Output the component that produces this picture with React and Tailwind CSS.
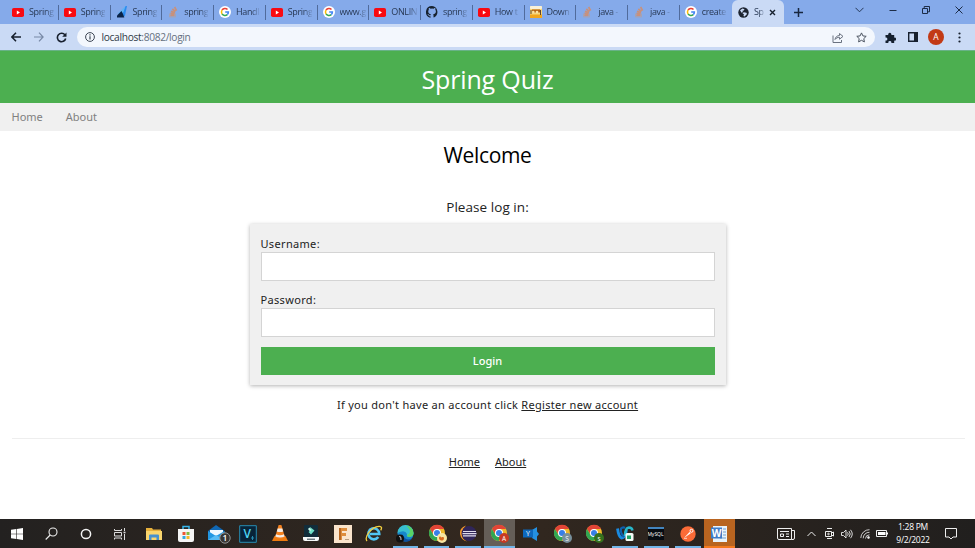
import React from "react";

const YouTube = () => (
  <svg width="12" height="9" viewBox="0 0 12 9">
    <rect width="12" height="9" rx="1.8" fill="#f80a12" />
    <path d="M4.8 2.5 8 4.5 4.8 6.5z" fill="#fff" />
  </svg>
);
const Azure = () => (
  <svg width="12" height="12" viewBox="0 0 12 12">
    <path d="M9.500 0 11 0 8.800 10.500 5 9z" fill="#2c8cf0" />
    <path d="M9.500 0 2 7.500 4 8.500 7.500 6z" fill="#5fb4f5" />
    <path d="M5.500 5 1 9.500v2h7.300L7 8z" fill="#0a2348" />
  </svg>
);
const Stack = () => (
  <svg width="12" height="12" viewBox="0 0 12 12" fill="none">
    <path d="M2.500 7.500v3.500h6V7.500" stroke="#a5a3b4" strokeWidth="1" />
    <path d="M3.300 9.400h4.300M3.400 7.300l4.300.600M4 5.200l4 1.500M5.300 3l3.200 2.500M7.600 1l2 3.700" stroke="#c8917c" strokeWidth="1.700" />
  </svg>
);
const Google = () => (
  <svg width="12" height="12" viewBox="0 0 12 12" fill="none" strokeWidth="1.5">
    <circle cx="6" cy="6" r="6" fill="#fff" />
    <path d="M8.5 3.6A3.5 3.5 0 0 0 3 4.2" stroke="#ea4335" />
    <path d="M3 4.2a3.5 3.5 0 0 0 0 3.6" stroke="#fbbc05" />
    <path d="M3 7.8a3.5 3.5 0 0 0 5.3.8" stroke="#34a853" />
    <path d="M8.3 8.6A3.3 3.3 0 0 0 9.4 6.1H6.2" stroke="#4285f4" />
  </svg>
);
const GitHub = () => (
  <svg width="12" height="12" viewBox="0 0 16 16">
    <path
      fill="#16212e"
      d="M8 0a8 8 0 0 0-2.5 15.6c.4.1.5-.2.5-.4v-1.5c-2 .5-2.6-.9-2.7-1.3-.1-.3-.5-.9-.8-1.1-.3-.2-.7-.6 0-.6s1.100.6 1.300.8c.7 1.200 1.900.9 2.300.7.1-.5.3-.9.5-1.100-1.800-.2-3.600-.9-3.600-4 0-.9.3-1.600.8-2.200-.1-.2-.4-1 .1-2.100 0 0 .7-.2 2.200.8a7.500 7.500 0 0 1 4 0c1.500-1 2.200-.8 2.200-.8.4 1.100.2 1.900.1 2.100.5.6.8 1.300.8 2.200 0 3.100-1.900 3.800-3.700 4 .3.2.5.7.5 1.500v2.200c0 .2.1.5.6.4A8 8 0 0 0 8 0z"
    />
  </svg>
);
const Javatpoint = () => (
  <svg width="12" height="12" viewBox="0 0 12 12">
    <rect width="12" height="12" rx="1" fill="#f8d57b" />
    <rect width="12" height="3" rx="1" fill="#f7f1da" />
    <path d="M2 3.5h8v3H2z" fill="#b56313" />
    <circle cx="3.3" cy="6" r="1.3" fill="#fae2a0" />
    <circle cx="7" cy="6" r="1.3" fill="#fae2a0" />
    <path d="M0 8.500h12V12H0z" fill="#f2a51d" />
    <path d="M1 4v4M10.500 4v5" stroke="#5d4529" />
  </svg>
);
const Globe = () => (
  <svg width="11" height="11" viewBox="0 0 11 11">
    <circle cx="5.500" cy="5.500" r="5.200" fill="#1d2430" />
    <path d="M2 3.200 4.500 1.600l2 .6-.7 1.200-1.400.4.500 1.200-1.300.7zM5.800 5.200l2.600.6.6 1.200-2.400 2.500-1.200-.5.6-1.500-1.500-1.200z" fill="#cadaf5" />
  </svg>
);

const tabs = [
  [YouTube, "Spring"],
  [YouTube, "Spring"],
  [Azure, "Spring"],
  [Stack, "spring"],
  [Google, "Handl"],
  [YouTube, "Spring"],
  [Google, "www.g"],
  [YouTube, "ONLIN"],
  [GitHub, "spring"],
  [YouTube, "How t"],
  [Javatpoint, "Down"],
  [Stack, "java -"],
  [Stack, "java -"],
  [Google, "create"],
];

function TabStrip() {
  return (
    <div className="flex h-[24px] bg-[#85aaea] pl-[7px] text-[#24344f]">
      {tabs.map(([Icon, label], i) => (
        <div key={i} className="relative flex w-[51.750px] shrink-0 items-center pl-[5px]">
          <span className="flex w-[12px] shrink-0 justify-center"><Icon /></span>
          <span className="ml-[5px] shrink-0 whitespace-nowrap bg-gradient-to-r from-[#24344f] from-65% to-[#7898d0] bg-clip-text text-[9px] leading-[14px] tracking-[-0.350px] text-transparent">
            {label}
          </span>
          {i < 13 && <span className="absolute right-0 top-[5px] h-[15px] w-px bg-[#506b9c]" />}
        </div>
      ))}
      <div className="flex w-[52px] shrink-0 items-center rounded-t-[6px] bg-[#cadaf5] pl-[6px]">
        <Globe />
        <span className="ml-[5.500px] w-[10px] whitespace-nowrap bg-gradient-to-r from-[#24344f] from-50% to-[#aabbd7] bg-clip-text text-[9px] leading-[14px] tracking-[-0.350px] text-transparent">
          Sp
        </span>
        <svg className="ml-[5px]" width="7" height="7" viewBox="0 0 7 7" stroke="#17202e" strokeWidth="1.400">
          <path d="M1 1l5 5M6 1 1 6" />
        </svg>
      </div>
      <svg className="ml-[10px] mt-[8px]" width="9" height="9" viewBox="0 0 9 9" stroke="#17263f" strokeWidth="1.500">
        <path d="M4.500 0v9M0 4.500h9" />
      </svg>
      <svg className="ml-[52px] mt-[7px]" width="9" height="6" viewBox="0 0 9 6" fill="none" stroke="#253857">
        <path d="M.5.800 4.500 4.800 8.500.800" />
      </svg>
      <svg className="ml-[25px] mt-[6px]" width="8" height="8" viewBox="0 0 8 8" stroke="#1c2c47">
        <path d="M.5 4.500h7" />
      </svg>
      <svg className="ml-[25px] mt-[6px]" width="8" height="8" viewBox="0 0 8 8" fill="none" stroke="#1c2c47">
        <path d="M.5 2.500h5v5h-5zM2.200 2V.5h5.300v5.300H6" />
      </svg>
      <svg className="ml-[25px] mt-[6px]" width="8" height="8" viewBox="0 0 8 8" stroke="#1c2c47">
        <path d="M.500.500l7 7M7.500.500l-7 7" />
      </svg>
    </div>
  );
}

function Toolbar() {
  return (
    <div className="flex h-[26px] items-center bg-[#cadaf5] pl-[11px]">
      <svg width="10" height="10" viewBox="0 0 10 10" fill="none" stroke="#17202e" strokeWidth="1.500">
        <path d="M10 5H1M5 .7.900 5 5 9.300" />
      </svg>
      <svg className="ml-[13px]" width="10" height="10" viewBox="0 0 10 10" fill="none" stroke="#7788a5" strokeWidth="1.200">
        <path d="M0 5h9M5 .7 9.100 5 5 9.300" />
      </svg>
      <svg className="ml-[12px]" width="11" height="11" viewBox="0 0 11 11">
        <path d="M9 3A4.200 4.200 0 1 0 9.700 6.500" fill="none" stroke="#17202e" strokeWidth="1.600" />
        <path d="M10.500.500v4.300H6.200z" fill="#17202e" />
      </svg>
      <div className="ml-[10px] flex h-[20px] w-[798px] items-center rounded-full bg-[#f3f7fd] pl-[8px] pr-[8px]">
        <svg width="10" height="10" viewBox="0 0 10 10" fill="none" stroke="#3d4653">
          <circle cx="5" cy="5" r="4.400" />
          <path d="M5 4.300v3.200M5 2.300v1.200" strokeWidth="1.200" />
        </svg>
        <span className="ml-[6.500px] text-[10.200px] leading-[14px] tracking-[-0.320px] text-[#667080]">
          <span className="text-[#303946]">localhost</span>:8082/login
        </span>
        <svg className="ml-auto" width="12" height="11" viewBox="0 0 12 11" fill="none" stroke="#6a7280">
          <path d="M1 3.500v7h8.500V8M3 7.500C3.500 4.800 5 3.700 7.500 3.500v-2L11 4.400 7.500 7.200V5.300C5.500 5.300 4.200 6 3 7.500z" />
        </svg>
        <svg className="ml-[12px]" width="11" height="11" viewBox="0 0 11 11" fill="none" stroke="#4b5360">
          <path d="M5.500.900l1.400 3 3.300.400-2.400 2.300.600 3.300-2.900-1.600-2.900 1.600.600-3.300L.800 4.300l3.300-.400z" />
        </svg>
      </div>
      <svg className="ml-[10px]" width="11" height="11" viewBox="0 0 11 11" fill="#15202f">
        <path d="M.500 3h2.800a1.600 1.600 0 1 1 3 0h2.900v2.700a1.500 1.500 0 1 1 0 2.900V11H6.300a1.500 1.500 0 1 0-2.900 0H.500V8.400a1.500 1.500 0 1 0 0-2.900z" />
      </svg>
      <svg className="ml-[12px]" width="10" height="10" viewBox="0 0 10 10">
        <path d="M.7.700h8.600v8.600H.700z" fill="none" stroke="#17202e" strokeWidth="1.400" />
        <path d="M6 0h4v10H6z" fill="#17202e" />
      </svg>
      <span className="ml-[10px] flex size-[16px] items-center justify-center rounded-full bg-[#c23a16] text-[8.500px] text-white">A</span>
      <svg className="ml-[14px]" width="3" height="11" viewBox="0 0 3 11" fill="#17202e">
        <circle cx="1.500" cy="1.500" r="1.100" /><circle cx="1.500" cy="5.500" r="1.100" /><circle cx="1.500" cy="9.500" r="1.100" />
      </svg>
    </div>
  );
}

function Field({ label, type }) {
  return (
    <label className="block text-[11px] leading-[17px] tracking-[0.330px] text-[#222]">
      {label}
      <input type={type} className="block h-[29px] w-full border border-[#d4d4d4] bg-white px-2 outline-none" />
    </label>
  );
}

function Page() {
  return (
    <main className="h-[469px] bg-white font-['Noto_Sans','DejaVu_Sans',sans-serif] text-[11px] text-black">
      <header className="flex h-[53px] items-center justify-center border-t border-[#68b287] bg-[#4caf50]">
        <h1 className="pt-[3px] font-['Open_Sans',sans-serif] text-[25px] leading-[36px] tracking-[-0.150px] text-white">Spring Quiz</h1>
      </header>
      <nav className="flex h-[28px] items-center gap-[23px] bg-[#f0f0f0] pl-[11.500px] pt-px text-[#808080]">
        <span>Home</span>
        <span>About</span>
      </nav>
      <h2 className="mt-[8px] text-center font-['Open_Sans',sans-serif] text-[21px] leading-[32px] tracking-[-0.350px]">Welcome</h2>
      <h3 className="mt-[26px] text-center font-['Open_Sans',sans-serif] text-[13.500px] leading-[20px] tracking-[0.060px] text-[#222]">Please log in:</h3>
      <form className="mx-auto mt-[7px] flex h-[161px] w-[476px] flex-col bg-[#f0f0f0] px-[11px] pt-[11px] shadow-[0_1px_4px_rgba(0,0,0,0.300)]">
        <Field label="Username:" type="text" />
        <div className="mt-[10px]"><Field label="Password:" type="password" /></div>
        <button type="button" className="mt-[10px] h-[28px] w-full bg-[#4caf50] text-center font-medium text-white">Login</button>
      </form>
      <p className="mt-[11px] text-center leading-[17px] tracking-[0.300px] text-[#222]">
        If you don't have an account click <span className="underline">Register new account</span>
      </p>
      <div className="ml-[12px] mr-[10px] mt-[25px] h-px bg-[#eeeeee]" />
      <footer className="mt-[14px] flex justify-center gap-[15px] leading-[17px] text-[#222] underline">
        <span>Home</span>
        <span>About</span>
      </footer>
    </main>
  );
}

const Chrome = ({ badge, letter }) => (
  <svg className="ml-[2px]" width="20" height="20" viewBox="0 0 20 20">
    <circle cx="9" cy="9" r="8" fill="#efb92a" />
    <path d="M2 5a8 8 0 0 1 14 0H9L6 11z" fill="#e24436" />
    <path d="M2 5a8 8 0 0 0 6.500 12l4-7L9 12.500 5.500 11z" fill="#31a653" />
    <circle cx="9" cy="9" r="4" fill="#fff" />
    <circle cx="9" cy="9" r="3" fill="#377fe8" />
    <circle cx="14" cy="14" r="5" fill={badge} />
    {letter ? (
      <text x="14" y="16.500" fontSize="6.500" textAnchor="middle" fill="#fff">{letter}</text>
    ) : (
      <path d="M11 14c0-2 2-2 2-.5 1-1 3-.5 3 .5 0 2-1 2.500-2.500 2.500S11 15.500 11 14z" fill="#d86a20" />
    )}
  </svg>
);
const Start = () => (
  <svg width="12" height="12" viewBox="0 0 12 12" fill="#fff">
    <path d="M0 1.700 5.300 1v4.700H0zM5.900.900 12 0v5.700H5.900zM0 6.300h5.300V11L0 10.300zM5.900 6.300H12V12l-6.100-.900z" />
  </svg>
);
const Search = () => (
  <svg width="13" height="13" viewBox="0 0 13 13" fill="none" stroke="#eee" strokeWidth="1.100">
    <circle cx="8" cy="5" r="4" /><path d="M5.200 8 .700 12.500" />
  </svg>
);
const Cortana = () => (
  <svg width="12" height="12" viewBox="0 0 12 12"><circle cx="6" cy="6" r="4.600" fill="none" stroke="#f4f4f4" strokeWidth="1.500" /></svg>
);
const TaskView = () => (
  <svg width="12" height="12" viewBox="0 0 12 12" fill="none" stroke="#ddd">
    <path d="M.5 1v1.500h7V1M.5 4.500h7v3.500h-7zM.5 11.500V10h7v1.500M10.500 0v3M10.500 6v6" /><path d="M9.500 4.500h2" strokeWidth="1.600" />
  </svg>
);
const Explorer = () => (
  <svg width="16" height="14" viewBox="0 0 16 14">
    <path d="M0 1h6l1 1.500h8V12H0z" fill="#e7b13c" /><path d="M0 4h16v9H0z" fill="#f9d56e" />
    <path d="M3 13V8.500q0-1 1-1h8q1 0 1 1V13h-2.500v-2.500h-5V13z" fill="#4690ce" />
  </svg>
);
const Store = () => (
  <svg width="18" height="18" viewBox="0 0 18 18">
    <path d="M6 5V1.500h6V5" fill="none" stroke="#36b6ec" strokeWidth="1.500" />
    <path d="M1 4h16v11q0 2-2 2H3q-2 0-2-2z" fill="#f5f5f5" />
    <path d="M5.500 7h3v3h-3z" fill="#ed5534" /><path d="M9.500 7h3v3h-3z" fill="#82ba3f" />
    <path d="M5.500 11h3v3h-3z" fill="#34a6df" /><path d="M9.500 11h3v3h-3z" fill="#f4b929" />
  </svg>
);
const Mail = () => (
  <svg className="ml-[5px]" width="24" height="20" viewBox="0 0 24 20">
    <path d="M1 7 9 1l8.500 6v9H1z" fill="#1067b3" /><path d="M3 6h13v6H3z" fill="#eef8ff" />
    <path d="M1 7l8 5 8.500-5v9H1z" fill="#2297e2" /><path d="M1 16l8-5 8.500 5z" fill="#55bbf5" />
    <circle cx="18" cy="14" r="5.200" fill="#393634" stroke="#929292" />
    <text x="18" y="17" textAnchor="middle" fontSize="8.500" fontWeight="600" fill="#fff">1</text>
  </svg>
);
const Vegas = () => (
  <svg width="18" height="18" viewBox="0 0 18 18">
    <path d="M.7.700h16.600v16.600H.700z" fill="#082439" stroke="#278db2" />
    <text x="8.300" y="13" textAnchor="middle" fontSize="12" fontWeight="600" fill="#4fd6f3">V</text>
    <path d="M13.500 11v4M12 13h3" stroke="#278db2" />
  </svg>
);
const Vlc = () => (
  <svg width="16" height="17" viewBox="0 0 16 17">
    <path d="M2.500 11h11L16 16H0z" fill="#ee7b10" /><path d="M6.600 0h2.800l3.600 12.500q-5 2.500-10 0z" fill="#f58220" />
    <path d="M5.700 3.500h4.600l.9 3q-3.200 1.200-6.400 0zM4 9.300q4 1.700 8 0l.6 2.200q-4.600 2-9.200 0z" fill="#f4eee8" />
  </svg>
);
const Filmora = () => (
  <svg width="16" height="17" viewBox="0 0 16 17">
    <rect x="1" width="14" height="13" rx="1" fill="#112d3b" /><path d="M7 2l4.500 3.500L8 9.500 5.500 7 7.500 5.500z" fill="#6de0c6" /><path d="M5 4 6.500 2.500 8.500 5 7 6.500z" fill="#c6f5ea" />
    <path d="M0 12h16v2q0 2-2 2H2q-2 0-2-2z" fill="#f7fafa" /><path d="M4 14.200h8" stroke="#30404b" />
  </svg>
);
const FLogo = () => (
  <svg width="18" height="18" viewBox="0 0 18 18">
    <path d="M0 0h18v18H0z" fill="#fae4cc" /><path d="M5 3h8v3H8v2h4v3H8v4H5z" fill="#de8d3c" /><path d="M5 3h2v12H5z" fill="#b86722" /><path d="M11 14.500h4" stroke="#b79c80" />
  </svg>
);
const IE = () => (
  <svg width="18" height="17" viewBox="0 0 18 17" fill="none">
    <path d="M13.300 12A5.500 5.500 0 1 1 14.300 9H5" stroke="#51c6f4" strokeWidth="2.600" />
    <path d="M2 16C-1 12 6 2 14 1.300c3-.2 3 2 1.700 4" stroke="#f3cf40" strokeWidth="1.300" />
  </svg>
);
const Edge = () => (
  <svg width="18" height="18" viewBox="0 0 18 18">
    <circle cx="9.500" cy="8.500" r="8" fill="#1687cb" /><path d="M1.500 8A8 8 0 0 1 17.500 8q0 4-4.500 4-3 0-2-3Q9 4 1.500 8z" fill="#38bfd0" />
    <path d="M10 .500A8 8 0 0 1 17.500 8q0 4-4.500 4-2 0-2-2c5-2 3-6-1-9.500z" fill="#5ad365" />
    <path d="M6 9q4 8 10 4.500-3 4-8 3-4-2-2-7.500z" fill="#0d4f9e" /><circle cx="4" cy="13.500" r="4" fill="#111" /><path d="M3 12q2-2 2 3" stroke="#ccc" fill="none" />
  </svg>
);
const Eclipse = () => (
  <svg width="18" height="17" viewBox="0 0 18 17">
    <path d="M7 .500Q0 3 1 9t7 7.500Q2 13 3 8t4-7.500z" fill="#f59a2c" /><circle cx="10" cy="8.500" r="7.500" fill="#302659" />
    <path d="M4 6.500h13M3.500 8.700h14M4 10.900h13" stroke="#dfdceb" strokeWidth="1.200" />
  </svg>
);
const YTool = () => (
  <svg width="16" height="14" viewBox="0 0 16 14">
    <path d="M9 3 14 0v4.500L16 7l-2 2.500V14L9 11z" fill="#2590e0" /><path d="M0 2.500h10v8H0z" fill="#0d68bd" />
    <text x="5" y="9.300" textAnchor="middle" fontSize="7" fill="#fff">Y</text>
  </svg>
);
const WebEx = () => (
  <svg width="18" height="17" viewBox="0 0 18 17" fill="none">
    <path d="M1.500 3.500q1 8 4 9.500 3 0 4-4l1-4" stroke="#198be2" strokeWidth="2.800" />
    <path d="M8 12Q4 8 5 3.500 7 1.500 9 3" stroke="#0c5fae" strokeWidth="2.200" />
    <path d="M9 11q0-8 4-8.500 3 0 3.500 3" stroke="#27b7cb" strokeWidth="2.500" /><rect x="9.500" y="8" width="8" height="8" rx="1.500" fill="#f4fbf7" /><path d="M11 10.500h4v3.500h-4z" fill="#20a568" />
  </svg>
);
const MySql = () => (
  <svg width="16" height="13" viewBox="0 0 16 13">
    <path d="M0 0h16v13H0z" fill="#060b12" /><path d="M0 0h16v2H0z" fill="#4385bf" />
    <text x="7.500" y="8.500" textAnchor="middle" fontSize="5" fill="#fff">MySQL</text>
  </svg>
);
const Postman = () => (
  <svg width="16" height="16" viewBox="0 0 16 16">
    <circle cx="8" cy="8" r="7.700" fill="#fb6b37" /><path d="M4 12 9.500 6l1.300 1.300z" fill="#fff" /><circle cx="11.500" cy="4.800" r="1.500" fill="none" stroke="#fff" /><path d="M4 12.300h3" stroke="#fff" strokeWidth=".7" />
  </svg>
);
const Word = () => (
  <svg width="17" height="16" viewBox="0 0 17 16">
    <path d="M2 0h14v16H2z" fill="#e8f2fb" /><path d="M12 3h3M12 6h3M12 9h3M9 12h6" stroke="#6c9bd1" />
    <path d="M0 1.500h11v11H0z" fill="#3f7cc8" /><text x="5.600" y="10.700" textAnchor="middle" fontSize="10" fontWeight="700" fill="#fff">W</text>
  </svg>
);

const apps = [
  { icon: <Explorer /> },
  { icon: <Store /> },
  { icon: <Mail /> },
  { icon: <Vegas /> },
  { icon: <Vlc /> },
  { icon: <Filmora /> },
  { icon: <FLogo /> },
  { icon: <IE /> },
  { icon: <Edge />, open: true },
  { icon: <Chrome badge="#f6e6a2" />, open: true },
  { icon: <Eclipse />, open: true },
  { icon: <Chrome badge="#c83a23" letter="A" />, open: true, tone: "bg-[#655e57]" },
  { icon: <YTool /> },
  { icon: <Chrome badge="#78909c" letter="S" /> },
  { icon: <Chrome badge="#34701e" letter="s" /> },
  { icon: <WebEx />, open: true },
  { icon: <MySql />, open: true },
  { icon: <Postman />, open: true },
  { icon: <Word />, tone: "bg-[#b86420]", alert: true },
];

function Taskbar() {
  return (
    <div className="flex h-[29px] bg-gradient-to-r from-[#232120] via-[#33281f] via-50% to-[#211f1e]">
      {[Start, Search, Cortana, TaskView].map((Icon, i) => (
        <div key={i} className="flex w-[34.250px] shrink-0 items-center justify-center"><Icon /></div>
      ))}
      <div className="ml-[1.500px] flex">
        {apps.map((app, i) => (
          <div key={i} className={`relative flex w-[31.400px] shrink-0 items-center justify-center ${app.tone || ""}`}>
            {app.icon}
            {app.open && <span className={`absolute bottom-0 h-[2px] bg-[#72b5e8] ${app.tone ? "inset-x-0" : "inset-x-[3px]"}`} />}
            {app.alert && <span className="absolute inset-x-0 bottom-0 h-[2px] bg-[#f4791e]" />}
          </div>
        ))}
      </div>
      <div className="ml-auto flex items-center text-white">
        <svg width="18" height="12" viewBox="0 0 18 12" fill="none" stroke="#eee">
          <path d="M.5.500h14v11H2q-1.500 0-1.500-1.500zM14.500 2.500h3v7.500q0 1.500-1.500 1.500h-1.500M3 3.500h9M9 6h3M9 8.500h3" /><path d="M3.500 6h3v2.500h-3z" />
        </svg>
        <svg className="ml-[12px]" width="9" height="6" viewBox="0 0 9 6" fill="none" stroke="#eee"><path d="M.500 5 4.500 1 8.500 5" /></svg>
        <svg className="ml-[9px]" width="9" height="11" viewBox="0 0 9 11" fill="none" stroke="#eee">
          <path d="M2 .500h5M.500 3.500h6v5h-6zM6.500 5l2-1v4l-2-1M2 10.500h5" /><circle cx="3.500" cy="6" r=".8" />
        </svg>
        <svg className="ml-[7px]" width="12" height="10" viewBox="0 0 12 10" fill="none" stroke="#eee" strokeWidth=".9">
          <path d="M.500 3.500h2L5 1v8L2.500 6.500h-2zM6.500 3.300q1.500 1.700 0 3.400M8 2q2.500 3 0 6M9.500.800q3.500 4.200 0 8.400" />
        </svg>
        <svg className="ml-[7px]" width="10" height="10" viewBox="0 0 10 10" fill="none" stroke="#ddd" strokeWidth=".9">
          <path d="M.800 9A8.500 8.500 0 0 1 9.500.700M3.200 9.300A6 6 0 0 1 9.500 3.300M5.500 9.500A4 4 0 0 1 9.500 5.800" /><circle cx="8.500" cy="8.500" r="1" fill="#eee" />
        </svg>
        <svg className="ml-[6px]" width="12" height="7" viewBox="0 0 12 7"><path d="M.500.500h10v6H.500z" fill="none" stroke="#eee" /><path d="M2 2h7.500v3H2zM10.500 2.500H12v2h-1.500z" fill="#fff" /></svg>
        <div className="ml-[8px] w-[34px] whitespace-nowrap pb-px text-center text-[8.500px] leading-[13px] tracking-[-0.250px]">
          <div>1:28 PM</div>
          <div className="-mx-1">9/2/2022</div>
        </div>
        <svg className="ml-[15px] mr-[18px]" width="12" height="12" viewBox="0 0 12 12" fill="none" stroke="#eee">
          <path d="M.500.500h11v8.500H8L6 11 4 9H.500z" />
        </svg>
      </div>
    </div>
  );
}

export default function App() {
  return (
    <div className="h-[548px] w-[975px] overflow-hidden font-['Open_Sans','Noto_Sans',sans-serif]">
      <TabStrip />
      <Toolbar />
      <Page />
      <Taskbar />
    </div>
  );
}
